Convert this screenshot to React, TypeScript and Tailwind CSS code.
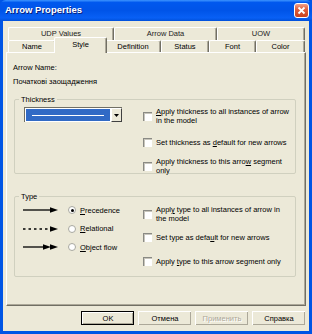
import React from 'react';

const font = { fontFamily: '"Liberation Sans", Arial, sans-serif' };

const Check: React.FC<{ lines: React.ReactNode[]; className?: string }> = ({ lines, className = '' }) => (
  <div className={`flex items-center gap-[4px] ${className}`}>
    <div className="w-[9px] h-[9px] shrink-0 bg-white border-t border-l border-[#8A8A84] border-r-[#F4F4F0] border-b-[#F4F4F0] shadow-[inset_1px_1px_0_#C8C6BC]" />
    <div className="leading-[9px] whitespace-nowrap">
      {lines.map((l, i) => (
        <div key={i}>{l}</div>
      ))}
    </div>
  </div>
);

const Radio: React.FC<{ checked?: boolean; label: React.ReactNode; arrow: React.ReactNode }> = ({ checked, label, arrow }) => (
  <div className="h-[18.5px] flex items-center">
    <div className="ml-[8px] w-[36px] h-[8px] flex items-center">{arrow}</div>
    <div className="ml-[9px] w-[8px] h-[8px] rounded-full bg-white border border-[#A8A8A0] flex items-center justify-center">
      {checked && <div className="w-[3px] h-[3px] rounded-full bg-black" />}
    </div>
    <div className="ml-[4px] leading-[9px]">{label}</div>
  </div>
);

const GroupBox: React.FC<{ title: string; className: string; children: React.ReactNode }> = ({ title, className, children }) => (
  <div className={`relative ml-[7px] w-[282px] border border-[#D0D0BF] rounded-[2px] ${className}`}>
    <div className="absolute -top-[5px] left-[4px] px-[2px] bg-[#ECE9D8] leading-[9px]">{title}</div>
    {children}
  </div>
);

const Btn: React.FC<{ label: string; def?: boolean; disabled?: boolean }> = ({ label, def, disabled }) => (
  <div className={`w-[53px] h-[14px] ${def ? 'border border-black' : ''}`}>
    <div className="h-full flex items-center justify-center bg-[#ECE9D8] border-t border-l border-white border-r-[#716F64] border-b-[#716F64] shadow-[inset_-1px_-1px_0_#ACA899]">
      <span className={disabled ? 'text-[#ACA899] [text-shadow:1px_1px_0_#fff]' : ''}>{label}</span>
    </div>
  </div>
);

const Tab: React.FC<{ label: string; w: string; sel?: boolean }> = ({ label, w, sel }) => (
  <div
    className={`${w} flex items-center justify-center bg-[#ECE9D8] border-t border-l border-white border-r border-r-[#716F64] rounded-t-[2px] shadow-[inset_-1px_0_0_#ACA899] ${
      sel ? 'relative z-10 -mt-[2px] h-[16px] -mx-[2px] pb-[2px]' : 'h-[13px]'
    }`}
  >
    {label}
  </div>
);

export default function App() {
  return (
    <div className="w-[312px] h-[334px] flex flex-col bg-[#0055E5] text-[7.5px] text-black" style={font}>
      <div className="h-[21px] shrink-0 flex items-center justify-between pl-[5px] pr-[3px] rounded-t-[6px] bg-[linear-gradient(to_bottom,#3D95FF,#0058EE_12%,#0054E8_50%,#0860F5_85%,#0050DA)]">
        <span className="text-white font-bold text-[9.5px] [text-shadow:1px_1px_0_#0A1E7A]">Arrow Properties</span>
        <div className="w-[15px] h-[15px] rounded-[3px] border border-white bg-[linear-gradient(to_bottom,#F0A08A,#E0603E_40%,#C7401E)] flex items-center justify-center">
          <svg width="9" height="9" viewBox="0 0 9 9">
            <path d="M1.5 1.5 L7.5 7.5 M7.5 1.5 L1.5 7.5" stroke="white" strokeWidth="1.8" />
          </svg>
        </div>
      </div>
      <div className="mx-[3px] mb-[3px] flex-1 bg-[#ECE9D8] flex flex-col">
        <div className="pt-[6px] pl-[5px]">
          <div className="flex text-[#222]">
            <Tab label="UDP Values" w="w-[106px]" />
            <Tab label="Arrow Data" w="w-[103px]" />
            <Tab label="UOW" w="w-[88px]" />
          </div>
          <div className="flex items-end h-[13px]">
            <Tab label="Name" w="w-[48px]" />
            <Tab label="Style" w="w-[53px]" sel />
            <Tab label="Definition" w="w-[56px]" />
            <Tab label="Status" w="w-[48px]" />
            <Tab label="Font" w="w-[47px]" />
            <Tab label="Color" w="w-[49px]" />
          </div>
        </div>
        <div className="-mt-[1px] ml-[3px] w-[300px] h-[254px] border-t border-l border-white border-r border-b border-r-[#716F64] border-b-[#716F64] shadow-[inset_-1px_-1px_0_#ACA899]">
          <div className="pl-[6px] pt-[10px] leading-[9px]">Arrow Name:</div>
          <div className="pl-[6px] pt-[5px] leading-[9px]">Початкові заощадження</div>
          <GroupBox title="Thickness" className="mt-[13px] h-[75px]">
            <div className="flex pt-[7px]">
              <div className="w-[128px] pl-[9px]">
                <div className="w-[98px] h-[15px] flex border-t border-l border-[#716F64] border-r-white border-b-white bg-white">
                  <div className="flex-1 m-[1px] bg-[#316AC5] flex items-center px-[6px]">
                    <div className="w-full h-[1px] bg-white" />
                  </div>
                  <div className="w-[11px] bg-[#ECE9D8] border-t border-l border-white border-r border-b border-r-[#404040] border-b-[#404040] flex items-center justify-center">
                    <svg width="5" height="3" viewBox="0 0 5 3">
                      <path d="M0 0 H5 L2.5 3 Z" fill="black" />
                    </svg>
                  </div>
                </div>
              </div>
              <div className="flex flex-col">
                <Check className="h-[18px]" lines={[<><u>A</u>pply thickness to all instances of arrow</>, 'in the model']} />
                <Check className="h-[9px] mt-[13px]" lines={[<>Set thickness as <u>d</u>efault for new arrows</>]} />
                <Check className="h-[18px] mt-[10px]" lines={[<>Apply thickness to this arro<u>w</u> segment</>, 'only']} />
              </div>
            </div>
          </GroupBox>
          <GroupBox title="Type" className="mt-[22px] h-[81px]">
            <div className="flex">
              <div className="w-[128px] pt-[4px]">
                <Radio
                  checked
                  label={<><u>P</u>recedence</>}
                  arrow={
                    <svg width="36" height="8" viewBox="0 0 36 8">
                      <path d="M0 4 H29" stroke="black" strokeWidth="1.3" />
                      <path d="M27 1.2 L35 4 L27 6.8 Z" fill="black" />
                    </svg>
                  }
                />
                <Radio
                  label={<><u>R</u>elational</>}
                  arrow={
                    <svg width="36" height="8" viewBox="0 0 36 8">
                      <path d="M0 4 H29" stroke="black" strokeWidth="1.3" strokeDasharray="2.5 3" />
                      <path d="M27 1.2 L35 4 L27 6.8 Z" fill="black" />
                    </svg>
                  }
                />
                <Radio
                  label={<><u>O</u>bject flow</>}
                  arrow={
                    <svg width="36" height="8" viewBox="0 0 36 8">
                      <path d="M0 4 H22" stroke="black" strokeWidth="1.3" />
                      <path d="M20 1.2 L28 4 L20 6.8 Z" fill="black" />
                      <path d="M27 1.2 L35 4 L27 6.8 Z" fill="black" />
                    </svg>
                  }
                />
              </div>
              <div className="flex flex-col pt-[8px]">
                <Check className="h-[18px]" lines={[<>Appl<u>y</u> type to all instances of arrow in</>, 'the model']} />
                <Check className="h-[9px] mt-[10px]" lines={[<>Set type as defa<u>u</u>lt for new arrows</>]} />
                <Check className="h-[9px] mt-[15px]" lines={[<>Apply <u>t</u>ype to this arrow segment only</>]} />
              </div>
            </div>
          </GroupBox>
        </div>
        <div className="mt-[5px] pr-[4px] flex justify-end gap-[4px]">
          <Btn label="OK" def />
          <Btn label="Отмена" />
          <Btn label="Применить" disabled />
          <Btn label="Справка" />
        </div>
      </div>
    </div>
  );
}
